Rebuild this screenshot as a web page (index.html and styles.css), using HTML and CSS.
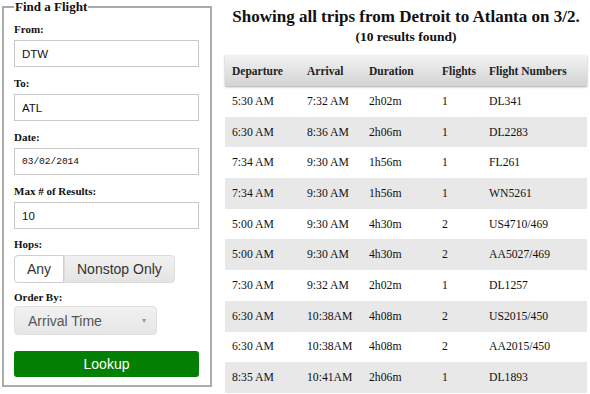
FILE: index.html
```html
<!DOCTYPE html>
<html lang="en">
<head>
    <meta charset="UTF-8">
    <meta name="viewport" content="width=device-width, initial-scale=1.0">
    <title>Find a Flight</title>
    <link rel="stylesheet" href="styles.css">
</head>
<body>
    <div class="page">
        <!-- Search form -->
        <fieldset class="search">
            <legend>Find a Flight</legend>

            <label class="field-label" for="from">From:</label>
            <input class="text-input" id="from" type="text" value="DTW">

            <label class="field-label" for="to">To:</label>
            <input class="text-input" id="to" type="text" value="ATL">

            <label class="field-label" for="date">Date:</label>
            <input class="text-input date-input" id="date" type="text" value="03/02/2014">

            <label class="field-label" for="max">Max # of Results:</label>
            <input class="text-input" id="max" type="text" value="10">

            <div class="field-label">Hops:</div>
            <div class="toggle-group">
                <button class="toggle active">Any</button>
                <button class="toggle">Nonstop Only</button>
            </div>

            <div class="field-label order-label">Order By:</div>
            <button class="dropdown">
                <span>Arrival Time</span>
                <span class="caret">&#9662;</span>
            </button>

            <button class="lookup">Lookup</button>
        </fieldset>

        <!-- Results -->
        <div class="results">
            <h2 class="results-title">Showing all trips from Detroit to Atlanta on 3/2.</h2>
            <p class="results-count">(10 results found)</p>

            <table class="trips">
                <thead>
                    <tr>
                        <th class="col-dep">Departure</th>
                        <th class="col-arr">Arrival</th>
                        <th class="col-dur">Duration</th>
                        <th class="col-fl">Flights</th>
                        <th>Flight Numbers</th>
                    </tr>
                </thead>
                <tbody>
                    <tr><td>5:30 AM</td><td>7:32 AM</td><td>2h02m</td><td>1</td><td>DL341</td></tr>
                    <tr><td>6:30 AM</td><td>8:36 AM</td><td>2h06m</td><td>1</td><td>DL2283</td></tr>
                    <tr><td>7:34 AM</td><td>9:30 AM</td><td>1h56m</td><td>1</td><td>FL261</td></tr>
                    <tr><td>7:34 AM</td><td>9:30 AM</td><td>1h56m</td><td>1</td><td>WN5261</td></tr>
                    <tr><td>5:00 AM</td><td>9:30 AM</td><td>4h30m</td><td>2</td><td>US4710/469</td></tr>
                    <tr><td>5:00 AM</td><td>9:30 AM</td><td>4h30m</td><td>2</td><td>AA5027/469</td></tr>
                    <tr><td>7:30 AM</td><td>9:32 AM</td><td>2h02m</td><td>1</td><td>DL1257</td></tr>
                    <tr><td>6:30 AM</td><td>10:38AM</td><td>4h08m</td><td>2</td><td>US2015/450</td></tr>
                    <tr><td>6:30 AM</td><td>10:38AM</td><td>4h08m</td><td>2</td><td>AA2015/450</td></tr>
                    <tr><td>8:35 AM</td><td>10:41AM</td><td>2h06m</td><td>1</td><td>DL1893</td></tr>
                </tbody>
            </table>
        </div>
    </div>
</body>
</html>
```

FILE: styles.css
```css
* {
    box-sizing: border-box;
}

body {
    margin: 0;
    background-color: white;
    color: #111;
    font-family: "Liberation Serif", "Times New Roman", serif;
}

.page {
    display: flex;
    align-items: flex-start;
    gap: 13px;
    padding-left: 2px;
}

/* Left search form */
.search {
    width: 210px;
    height: 387px;
    margin: 0;
    padding: 0 11px 0 10px;
    border: 2px solid #ababab;
}

.search legend {
    padding: 0 1px;
    font-size: 13px;
    font-weight: bold;
    line-height: 14px;
}

.field-label {
    display: block;
    margin: 10px 0 4px;
    font-size: 11px;
    font-weight: bold;
    line-height: 13px;
}

.search .field-label:first-of-type {
    margin-top: 9px;
}

.search .order-label {
    margin: 8px 0 2px;
}

.text-input {
    display: block;
    width: 185px;
    height: 27px;
    margin: 0;
    padding: 0 7px;
    border: 1px solid #c8c8c8;
    font-family: "Liberation Sans", Arial, sans-serif;
    font-size: 11.5px;
    color: #111;
    background-color: white;
}

.date-input {
    font-family: "Liberation Mono", "Courier New", monospace;
    font-size: 9.5px;
}

.toggle-group {
    display: flex;
    height: 28px;
}

.toggle {
    margin: 0;
    padding: 0 12px;
    border: 1px solid #dcdcdc;
    background: linear-gradient(#f1f1f1, #e4e4e4);
    font-family: "Liberation Sans", Arial, sans-serif;
    font-size: 14px;
    color: #333;
    border-radius: 0 4px 4px 0;
}

.toggle.active {
    width: 50px;
    padding: 0;
    background: white;
    border-color: #cfcfcf;
    border-radius: 4px 0 0 4px;
}

.dropdown {
    display: flex;
    justify-content: space-between;
    align-items: center;
    width: 143px;
    height: 29px;
    padding: 0 10px 0 13px;
    border: 1px solid #e0e0e0;
    border-radius: 4px;
    background: linear-gradient(#f1f1f1, #e6e6e6);
    font-family: "Liberation Sans", Arial, sans-serif;
    font-size: 14px;
    color: #555;
}

.dropdown .caret {
    font-size: 8px;
    color: #999;
}

.lookup {
    display: block;
    width: 185px;
    height: 26px;
    margin-top: 16px;
    border: none;
    border-radius: 3px;
    background-color: #038003;
    color: white;
    font-family: "Liberation Sans", Arial, sans-serif;
    font-size: 14px;
}

/* Right results */
.results {
    width: 362px;
}

.results-title {
    margin: 7px 0 0;
    text-align: center;
    font-size: 17px;
    line-height: 20px;
}

.results-count {
    margin: 0 0 9px;
    text-align: center;
    font-size: 13.5px;
    font-weight: bold;
    line-height: 19px;
}

.trips {
    width: 100%;
    border-collapse: collapse;
    font-size: 11.7px;
}

.trips th,
.trips td {
    padding: 0 0 0 7px;
    text-align: left;
}

.trips thead tr {
    height: 31px;
    background: linear-gradient(#f3f3f3, #d3d3d3);
    box-shadow: 0 1px 2px rgba(0, 0, 0, 0.35);
}

.trips th {
    font-size: 11.5px;
    color: #222;
}

.trips tbody tr {
    height: 30.7px;
}

.trips tbody tr:nth-child(even) {
    background-color: #e8e8e8;
}

.col-dep { width: 75px; }
.col-arr { width: 62px; }
.col-dur { width: 73px; }
.col-fl { width: 47px; }
```
